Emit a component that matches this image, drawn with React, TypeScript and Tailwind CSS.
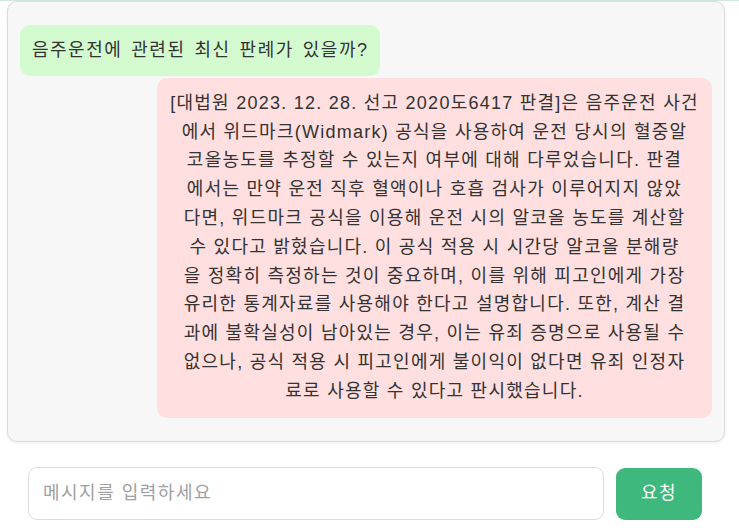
import React from 'react';

const answerLines = [
    '[대법원 2023. 12. 28. 선고 2020도6417 판결]은 음주운전 사건',
    '에서 위드마크(Widmark) 공식을 사용하여 운전 당시의 혈중알',
    '코올농도를 추정할 수 있는지 여부에 대해 다루었습니다. 판결',
    '에서는 만약 운전 직후 혈액이나 호흡 검사가 이루어지지 않았',
    '다면, 위드마크 공식을 이용해 운전 시의 알코올 농도를 계산할',
    '수 있다고 밝혔습니다. 이 공식 적용 시 시간당 알코올 분해량',
    '을 정확히 측정하는 것이 중요하며, 이를 위해 피고인에게 가장',
    '유리한 통계자료를 사용해야 한다고 설명합니다. 또한, 계산 결',
    '과에 불확실성이 남아있는 경우, 이는 유죄 증명으로 사용될 수',
    '없으나, 공식 적용 시 피고인에게 불이익이 없다면 유죄 인정자',
    '료로 사용할 수 있다고 판시했습니다.',
];

export default function App() {
    return (
        <div className="w-[739px] h-[532px] overflow-hidden bg-white font-['Liberation_Sans','Noto_Sans_CJK_KR',sans-serif] text-[#333]">
            <div className="h-px bg-[#d3e6e0]" />

            {/* chat log */}
            <div className="ml-[7px] w-[718px] h-[441px] rounded-[10px] border border-[#dcdcdc] bg-[#f7f7f7] shadow-[0_1px_3px_rgba(0,0,0,0.08)] px-[12px] pt-[23px] flex flex-col">
                <div className="self-start rounded-[10px] bg-[#d4fbd0] px-[12px] py-[11px] text-[18px] leading-[28.8px] tracking-[1.5px] [word-spacing:2.5px] whitespace-nowrap">
                    음주운전에 관련된 최신 판례가 있을까?
                </div>
                <div className="self-end mt-[2px] w-[555px] rounded-[10px] bg-[#ffdfdf] px-[12px] pt-[11px] pb-[12px] text-center text-[18px] leading-[28.8px] tracking-[1.25px]">
                    {answerLines.map((line, i) => (
                        <div key={i} className="whitespace-nowrap">{line}</div>
                    ))}
                </div>
            </div>

            {/* input row */}
            <div className="mt-[25px] ml-[28px] flex items-center gap-[12px]">
                <input
                    type="text"
                    placeholder="메시지를 입력하세요"
                    className="w-[576px] h-[53px] rounded-[9px] border border-[#dcdcdc] bg-white px-[14px] text-[18px] tracking-[1.5px] outline-none placeholder:text-[#a0a0a0]"
                />
                <button className="w-[86px] h-[52px] rounded-[9px] bg-[#3fb87d] text-white text-[18px] tracking-[1.5px]">
                    요청
                </button>
            </div>
        </div>
    );
}
